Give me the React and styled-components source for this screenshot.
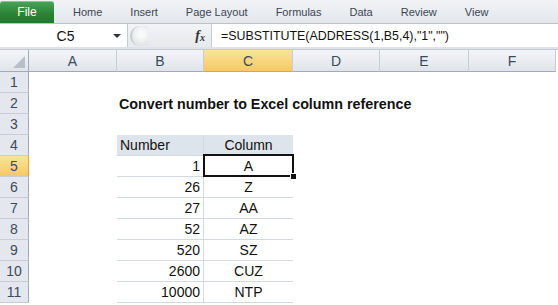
import React from "react";
import styled, { createGlobalStyle, css } from "styled-components";

const GlobalStyle = createGlobalStyle`
  html, body {
    margin: 0;
    padding: 0;
    background: #ffffff;
    overflow: hidden;
  }
  body {
    font-family: "Liberation Sans", Arial, sans-serif;
  }
`;

const tabs = ["Home", "Insert", "Page Layout", "Formulas", "Data", "Review", "View"];
const columns = [
  { label: "A", width: 88 },
  { label: "B", width: 87 },
  { label: "C", width: 89, selected: true },
  { label: "D", width: 87 },
  { label: "E", width: 89 },
  { label: "F", width: 87 },
];
const data = [
  [1, "A"],
  [26, "Z"],
  [27, "AA"],
  [52, "AZ"],
  [520, "SZ"],
  [2600, "CUZ"],
  [10000, "NTP"],
];

const App = () => {
  const rows = [];
  for (let r = 1; r <= 11; r++) {
    rows.push(
      <RowHead key={"rh" + r} selected={r === 5}>
        {r}
      </RowHead>
    );
    for (let c = 0; c < 6; c++) {
      const key = r + "-" + c;
      if (r === 2 && c === 1) {
        rows.push(
          <Cell key={key}>
            <Title>Convert number to Excel column reference</Title>
          </Cell>
        );
      } else if (r === 4 && c === 1) {
        rows.push(
          <TableCell key={key} head divider>
            Number
          </TableCell>
        );
      } else if (r === 4 && c === 2) {
        rows.push(
          <TableCell key={key} head align="center">
            Column
          </TableCell>
        );
      } else if (r >= 5 && c === 1) {
        rows.push(
          <TableCell key={key} align="right" divider>
            {data[r - 5][0]}
          </TableCell>
        );
      } else if (r >= 5 && c === 2) {
        rows.push(
          <TableCell key={key} align="center" active={r === 5}>
            {data[r - 5][1]}
          </TableCell>
        );
      } else {
        rows.push(<Cell key={key} />);
      }
    }
  }

  return (
    <>
      <GlobalStyle />
      <Window>
        <Ribbon>
          <FileTab>File</FileTab>
          <TabList>
            {tabs.map((t) => (
              <Tab key={t}>{t}</Tab>
            ))}
          </TabList>
        </Ribbon>
        <FormulaBar>
          <NameBox>
            <span>C5</span>
            <Caret />
          </NameBox>
          <Middle>
            <Grip />
            <Fx>
              f<sub>x</sub>
            </Fx>
          </Middle>
          <Formula>=SUBSTITUTE(ADDRESS(1,B5,4),"1","")</Formula>
        </FormulaBar>
        <Sheet>
          <Corner>
            <svg width="12" height="12" viewBox="0 0 12 12">
              <polygon points="12,0 12,12 0,12" fill="#b7bfca" />
            </svg>
          </Corner>
          {columns.map((col) => (
            <ColHead key={col.label} selected={col.selected}>
              {col.label}
            </ColHead>
          ))}
          {rows}
        </Sheet>
      </Window>
    </>
  );
};

const Window = styled.div`
  width: 558px;
  height: 305px;
  display: flex;
  flex-direction: column;
  background: #ffffff;
  overflow: hidden;
`;

const Ribbon = styled.div`
  height: 23px;
  display: flex;
  align-items: flex-end;
  background: linear-gradient(to bottom, #f1f3f6, #e3e7ec);
  border-bottom: 1px solid #b9c1cc;
  font-family: "Liberation Sans", Arial, sans-serif;
  font-size: 11px;
  color: #3b4654;
`;

const FileTab = styled.div`
  width: 54px;
  height: 22px;
  display: flex;
  align-items: center;
  justify-content: center;
  font-size: 12px;
  color: #ffffff;
  background: linear-gradient(to bottom, #4aa456, #2a8237 60%, #1f7a2c);
  border-radius: 3px 3px 0 0;
  box-shadow: inset 0 1px 0 rgba(255, 255, 255, 0.35);
`;

const TabList = styled.div`
  display: flex;
  margin-left: 5px;
`;

const Tab = styled.div`
  height: 22px;
  display: flex;
  align-items: center;
  padding: 0 14px;
`;

const FormulaBar = styled.div`
  height: 23px;
  display: flex;
  background: #dfe3e8;
  border-bottom: 1px solid #c3cad3;
  padding-bottom: 2px;
`;

const NameBox = styled.div`
  width: 127px;
  display: flex;
  align-items: center;
  justify-content: center;
  position: relative;
  background: #ffffff;
  border-right: 1px solid #c3cad3;
  font-family: "Liberation Sans", Arial, sans-serif;
  font-size: 14px;
  color: #111;
  span {
    margin-left: 4px;
  }
`;

const Caret = styled.div`
  position: absolute;
  right: 6px;
  top: 10px;
  width: 0;
  height: 0;
  border-left: 4px solid transparent;
  border-right: 4px solid transparent;
  border-top: 4px solid #333;
`;

const Middle = styled.div`
  width: 84px;
  display: flex;
  align-items: center;
  justify-content: space-between;
  background: linear-gradient(to bottom, #f2f4f6, #e6e9ed);
  border-right: 1px solid #c3cad3;
  padding: 0 6px 0 2px;
  box-sizing: border-box;
`;

const Grip = styled.div`
  width: 16px;
  height: 20px;
  border-radius: 10px 0 0 10px;
  border-left: 2px solid #c6ccd4;
  background: radial-gradient(circle at 60% 40%, #f8f9fa 20%, #e3e6ea 70%);
`;

const Fx = styled.div`
  font-family: "Liberation Serif", "Times New Roman", serif;
  font-style: italic;
  font-weight: bold;
  font-size: 14px;
  color: #333;
  sub {
    font-size: 10px;
    vertical-align: baseline;
    position: relative;
    top: 1px;
  }
`;

const Formula = styled.div`
  flex: 1;
  display: flex;
  align-items: center;
  padding-left: 9px;
  background: #ffffff;
  font-family: "Liberation Sans", Arial, sans-serif;
  font-size: 12.4px;
  color: #111;
  white-space: nowrap;
`;

const Sheet = styled.div`
  display: grid;
  grid-template-columns: 29px ${columns.map((c) => c.width + "px").join(" ")};
  grid-template-rows: 22px repeat(11, 21px);
  background: #ffffff;
  font-family: "Liberation Sans", Arial, sans-serif;
  font-size: 14px;
  color: #111;
`;

const headBase = css`
  display: flex;
  align-items: center;
  justify-content: center;
  box-sizing: border-box;
  color: #3b4a5e;
  font-size: 14px;
`;

const Corner = styled.div`
  ${headBase};
  justify-content: flex-end;
  align-items: flex-end;
  padding: 0 3px 3px 0;
  background: linear-gradient(to bottom, #f3f5f8, #e1e5eb);
  border-right: 1px solid #9eabbe;
  border-bottom: 1px solid #9eabbe;
`;

const ColHead = styled.div`
  ${headBase};
  border-right: 1px solid #c6cdd7;
  border-bottom: 1px solid ${(p) => (p.selected ? "#e2a43a" : "#9eabbe")};
  background: ${(p) =>
    p.selected
      ? "linear-gradient(to bottom, #fbe39a, #f5c965)"
      : "linear-gradient(to bottom, #f3f5f8, #e0e4ea)"};
`;

const RowHead = styled.div`
  ${headBase};
  border-right: 1px solid ${(p) => (p.selected ? "#e2a43a" : "#9eabbe")};
  border-bottom: 1px solid #c6cdd7;
  background: ${(p) =>
    p.selected ? "linear-gradient(to bottom, #fbe39a, #f5c965)" : "#e4e8ee"};
`;

const Cell = styled.div`
  position: relative;
  box-sizing: border-box;
`;

const Title = styled.div`
  position: absolute;
  left: 2px;
  top: 3px;
  white-space: nowrap;
  font-weight: bold;
  font-size: 14.3px;
  color: #111;
`;

const TableCell = styled.div`
  position: relative;
  box-sizing: border-box;
  display: flex;
  align-items: center;
  padding: 0 3px;
  justify-content: ${(p) =>
    p.align === "right" ? "flex-end" : p.align === "center" ? "center" : "flex-start"};
  background: ${(p) => (p.head ? "#dee4eb" : "#ffffff")};
  border-bottom: 1px solid #d3d9e0;
  border-right: ${(p) => (p.divider ? "1px solid #d3d9e0" : "none")};
  color: #111;
  ${(p) =>
    p.active &&
    css`
      &::after {
        content: "";
        position: absolute;
        left: -1px;
        top: -2px;
        right: -1px;
        bottom: -1px;
        border: 2px solid #111;
      }
      &::before {
        content: "";
        position: absolute;
        right: -4px;
        bottom: -4px;
        width: 5px;
        height: 5px;
        background: #111;
        border: 1px solid #fff;
        z-index: 1;
      }
    `}
`;

export default App;
